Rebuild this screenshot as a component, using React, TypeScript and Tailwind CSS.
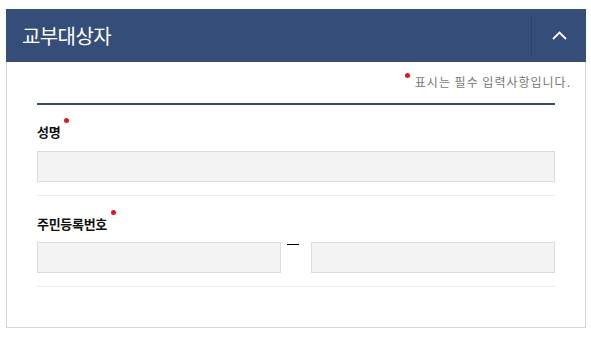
import React from "react";

const font = { fontFamily: '"Noto Sans CJK KR", "Noto Sans", sans-serif' };

function Dot() {
  return <span className="absolute -right-[9px] -top-[4px] h-[5px] w-[5px] rounded-full bg-[#e3141c]" />;
}

function Label({ text }: { text: string }) {
  return (
    <div className="h-5 leading-5">
      <span className="relative inline-block text-[13px] font-bold tracking-[-0.3px] text-[#111]">
        {text}
        <Dot />
      </span>
    </div>
  );
}

const inputCls = "h-[31px] border border-[#dcdcdc] bg-[#f3f3f3]";

export default function App() {
  return (
    <div className="w-[591px] bg-white pl-[6px] pr-[5px] pt-[9px]" style={font}>
      {/* header */}
      <div className="flex h-[53px] items-center bg-[#344d79]">
        <h2 className="flex-1 pl-4 text-[20px] font-normal tracking-[-0.6px] text-white">교부대상자</h2>
        <div className="h-[40px] w-px bg-[#2a4270]" />
        <button className="flex h-full w-[54px] items-center justify-center">
          <svg width="15" height="9" viewBox="0 0 15 9" fill="none">
            <path d="M1 8L7.5 1.5L14 8" stroke="white" strokeWidth="1.8" />
          </svg>
        </button>
      </div>

      {/* body */}
      <div className="border-x border-b border-[#d7d7d7] px-[30px] pb-[40px]">
        <div className="-mr-[16px] pt-[10px] text-right text-[12px] leading-5 tracking-[1px] text-[#777]">
          <span className="relative inline-block">
            <span className="absolute -left-[10px] top-[1px] h-[5px] w-[5px] rounded-full bg-[#e3141c]" />
            표시는 필수 입력사항입니다.
          </span>
        </div>
        <div className="mt-[11px] h-[2px] bg-[#3a4a64]" />

        <div className="border-b border-[#ebebeb] pb-[13px] pt-[15px]">
          <Label text="성명" />
          <div className={`mt-[11px] ${inputCls}`} />
        </div>

        <div className="border-b border-[#ebebeb] pb-[13px] pt-[16px]">
          <Label text="주민등록번호" />
          <div className="mt-[10px] flex">
            <div className={`flex-1 ${inputCls}`} />
            <div className="w-[30px] pl-[6px] pt-[2px]">
              <div className="h-px w-[12px] bg-black" />
            </div>
            <div className={`flex-1 ${inputCls}`} />
          </div>
        </div>
      </div>
    </div>
  );
}
